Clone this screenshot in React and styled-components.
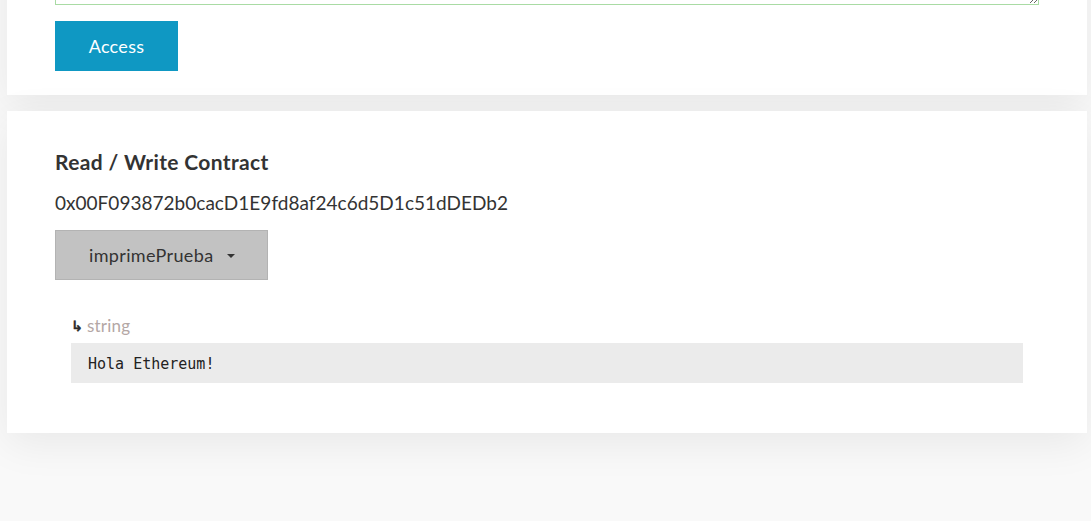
import React from 'react'
import styled, { createGlobalStyle } from 'styled-components'

const Global = createGlobalStyle`
  html, body {
    margin: 0;
    padding: 0;
    background: #f9f9f9;
    font-family: Lato, "Open Sans", sans-serif;
    color: #333;
  }
`

const Page = styled.div`
  margin-top: -119px;
  padding: 0 4px 90px 7px;
  display: flex;
  flex-direction: column;
  gap: 16px;
`

const Card = styled.section`
  background: #fff;
  padding: ${p => p.$pad};
  box-shadow: 0 10px 40px rgba(0, 0, 0, 0.07);
`

const Area = styled.textarea`
  display: block;
  box-sizing: border-box;
  width: 984px;
  height: 100px;
  border: 1px solid #a9dba4;
  outline: none;
  resize: vertical;
  margin: 0 0 16px;
`

const AccessButton = styled.button`
  width: 123px;
  height: 50px;
  border: none;
  background: #0f98c3;
  color: #fff;
  font-family: Lato, sans-serif;
  font-size: 18px;
  letter-spacing: 0.3px;
  cursor: pointer;
`

const Title = styled.h3`
  margin: 0;
  font-size: 21px;
  line-height: 24px;
  font-weight: 700;
  letter-spacing: 0.35px;
  color: #333;
`

const Address = styled.div`
  margin-top: 18px;
  font-size: 19px;
  line-height: 22px;
  letter-spacing: 0.02px;
  color: #333;
`

const Dropdown = styled.button`
  margin-top: 16px;
  width: 213px;
  height: 50px;
  display: flex;
  align-items: center;
  gap: 14px;
  padding: 0 0 0 33px;
  background: #c2c2c2;
  border: 1px solid #b3b3b3;
  font-family: Lato, sans-serif;
  font-size: 18px;
  letter-spacing: 0.35px;
  color: #333;
  cursor: pointer;
`

const Caret = styled.span`
  width: 0;
  height: 0;
  border-left: 4px solid transparent;
  border-right: 4px solid transparent;
  border-top: 4px solid #333;
  margin-top: 2px;
`

const Output = styled.div`
  margin: 36px 16px 0;
`

const TypeLabel = styled.div`
  font-size: 17px;
  line-height: 20px;
  letter-spacing: 0.2px;
  color: #b4a7a5;
  display: flex;
  align-items: center;
  gap: 4px;
`

const Arrow = styled.span`
  color: #2a2a2a;
  font-family: "DejaVu Sans", sans-serif;
  font-size: 14px;
  font-weight: 700;
  -webkit-text-stroke: 0.4px #2a2a2a;
`

const Result = styled.pre`
  margin: 7px 0 0;
  height: 40px;
  box-sizing: border-box;
  padding: 1px 17px 0;
  display: flex;
  align-items: center;
  background: #ebebeb;
  font-family: "DejaVu Sans Mono", monospace;
  font-size: 15px;
  color: #222;
`

export default function App() {
  return (
    <>
      <Global />
      <Page>
        <Card $pad="24px 48px 24px">
          <Area defaultValue="" />
          <AccessButton>Access</AccessButton>
        </Card>
        <Card $pad="39px 48px 50px">
          <Title>Read / Write Contract</Title>
          <Address>0x00F093872b0cacD1E9fd8af24c6d5D1c51dDEDb2</Address>
          <Dropdown>
            imprimePrueba
            <Caret />
          </Dropdown>
          <Output>
            <TypeLabel>
              <Arrow>↳</Arrow>
              string
            </TypeLabel>
            <Result>Hola Ethereum!</Result>
          </Output>
        </Card>
      </Page>
    </>
  )
}
